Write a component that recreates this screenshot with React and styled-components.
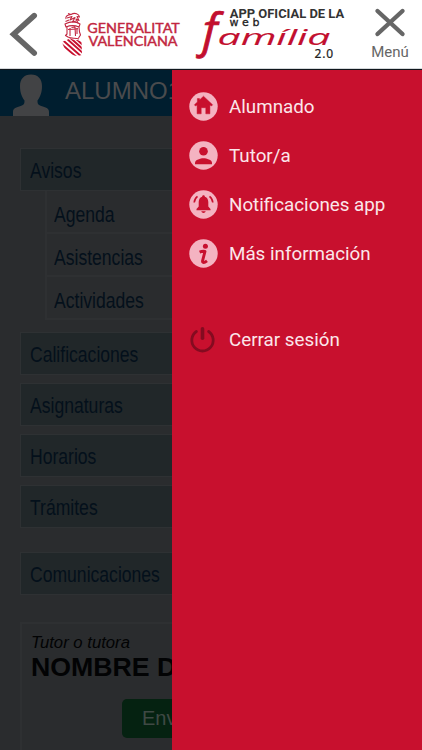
import React from "react"
import styled, { createGlobalStyle } from "styled-components"

const GlobalStyle = createGlobalStyle`
  * {
    box-sizing: border-box;
  }

  body {
    margin: 0;
    background: #2a2c2e;
    overflow: hidden;
  }
`

const Screen = styled.div`
  height: 750px;
  display: flex;
  flex-direction: column;
  overflow: hidden;
  font-family: Roboto, "Liberation Sans", sans-serif;
`

const Header = styled.header`
  flex: none;
  height: 69px;
  background: #fff;
  border-bottom: 1px solid #d5d8db;
  display: flex;
  align-items: flex-start;
`

const BackButton = styled.button`
  width: 60px;
  height: 68px;
  padding: 0;
  border: 0;
  background: none;
`

const Brand = styled.div`
  width: 130px;
  height: 68px;
`

const AppLogo = styled.div`
  width: 171px;
  height: 68px;
`

const MenuButton = styled.button`
  width: 58px;
  height: 68px;
  padding: 7px 0 0;
  border: 0;
  background: none;
  color: #666;
  font: 15px/18px Roboto, sans-serif;
  display: flex;
  flex-direction: column;
  align-items: center;
  gap: 4px;
`

const Body = styled.main`
  flex: 1;
  position: relative;
  overflow: hidden;
  border-top: 1px solid #10161c;
`

const StudentBar = styled.div`
  height: 46px;
  background: #001e2f;
  color: #4a4b4d;
  display: flex;
  align-items: flex-end;
  gap: 15px;
  padding-left: 12px;
  font: 24px/50px "Liberation Sans", sans-serif;
  white-space: nowrap;

  svg {
    flex: none;
  }
`

const Content = styled.div`
  padding: 32px 0 0 20px;
  font-family: "Liberation Sans", sans-serif;
  color: #04101b;
`

const Item = styled.div`
  height: 43px;
  margin-top: ${p => p.$gap || 0}px;
  padding: 2px 0 0 9px;
  border: 1px solid #2e3133;
  border-right: 0;
  background: #212729;
  display: flex;
  align-items: center;
`

const SubItem = styled.div`
  height: 43px;
  margin-left: 25px;
  padding: 6px 0 0 7px;
  border-left: 2px solid #2e3032;
  border-bottom: 2px solid #2e3032;
  display: flex;
  align-items: center;
`

const Label = styled.span`
  font-size: 21.3px;
  line-height: 24px;
  display: inline-block;
  transform: scaleX(0.825);
  transform-origin: left;
`

const Card = styled.div`
  height: 160px;
  margin-top: 27px;
  padding: 9px 0 0 9px;
  border: 2px solid #2e3032;
  color: #020304;
  white-space: nowrap;
`

const Role = styled.div`
  font-size: 16.7px;
  line-height: 19px;
  font-style: italic;
`

const Name = styled.div`
  font-size: 26.7px;
  line-height: 30px;
  font-weight: bold;
`

const SendButton = styled.button`
  display: block;
  width: 120px;
  height: 39px;
  margin: 17px 0 0 91px;
  padding: 0 0 0 20px;
  border: 0;
  border-radius: 5px;
  background: #052211;
  color: #3f4944;
  font: 20px "Liberation Sans", sans-serif;
  text-align: left;
`

const Drawer = styled.nav`
  position: absolute;
  top: 0;
  right: 0;
  bottom: 0;
  width: 250.5px;
  padding: 12px 0 0 17.5px;
  background: #c8102e;
  color: #fbe6ea;
`

const DrawerLink = styled.a`
  height: 49px;
  margin-top: ${p => p.$gap || 0}px;
  display: flex;
  align-items: center;
  gap: 11px;
  font-size: 18.8px;
  white-space: nowrap;
`

const PINK = "#f4b3c1"
const RED = "#c8102e"

const HomeIcon = () => (
  <svg width="29" height="29" viewBox="0 0 29 29">
    <circle cx="14.5" cy="14.5" r="14.2" fill={PINK} />
    <path d="M14.5 4.2 23.6 12.8 22.5 14 20.9 13V21.8H16.8V15.7H12.2V21.8H8.1V13L6.5 14 5.4 12.8 8.4 10V6.6H10.5V8Z" fill={RED} stroke={RED} strokeWidth=".5" />
  </svg>
)

const PersonIcon = () => (
  <svg width="29" height="29" viewBox="0 0 29 29">
    <circle cx="14.5" cy="14.5" r="14.2" fill={PINK} />
    <circle cx="14.5" cy="10.3" r="4.3" fill={RED} />
    <path d="M6 23.2V21.7C6 18.7 11.5 17.2 14.5 17.2S23 18.7 23 21.7V23.2Z" fill={RED} />
  </svg>
)

const BellIcon = () => (
  <svg width="29" height="29" viewBox="0 0 29 29">
    <circle cx="14.5" cy="14.5" r="14.2" fill={PINK} />
    <path d="M14.5 5.2C15.4 5.2 15.9 5.8 15.9 6.7 18.3 7.5 19.3 9.8 19.3 12V16.5L21.5 19V20.2H7.5V19L9.7 16.5V12C9.7 9.8 10.7 7.5 13.1 6.7 13.1 5.8 13.6 5.2 14.5 5.2ZM12.3 21.3H16.7C16.4 22.5 15.5 23 14.5 23S12.6 22.5 12.3 21.3Z" fill={RED} />
    <path d="M5.2 12.5C5.4 9.7 6.5 7.8 8.5 6.3M23.8 12.5C23.6 9.7 22.5 7.8 20.5 6.3" fill="none" stroke={RED} strokeWidth="1.6" />
  </svg>
)

const InfoIcon = () => (
  <svg width="29" height="29" viewBox="0 0 29 29">
    <circle cx="14.5" cy="14.5" r="14.2" fill={PINK} />
    <circle cx="16.4" cy="7.2" r="2.5" fill={RED} />
    <path d="M10.6 13.1C12.2 12.4 13.8 12.1 16 12.4L13.6 21.6C13.1 24.3 15.3 23.9 18 21.8" fill="none" stroke={RED} strokeWidth="2.9" strokeLinejoin="round" />
  </svg>
)

const PowerIcon = () => (
  <svg width="29" height="29" viewBox="0 0 29 29" fill="none" stroke="#840b20" strokeLinecap="round">
    <path d="M7.4 6.5A10.7 10.7 0 1 0 19.6 6.5" strokeWidth="2.8" />
    <path d="M13.5 3.7V13.3" strokeWidth="3.6" />
  </svg>
)

const links = [
  { text: "Alumnado", Icon: HomeIcon },
  { text: "Tutor/a", Icon: PersonIcon },
  { text: "Notificaciones app", Icon: BellIcon },
  { text: "Más información", Icon: InfoIcon },
  { text: "Cerrar sesión", Icon: PowerIcon, gap: 37 },
]

const items = [
  { text: "Calificaciones", gap: 12 },
  { text: "Asignaturas", gap: 8 },
  { text: "Horarios", gap: 8 },
  { text: "Trámites", gap: 8 },
  { text: "Comunicaciones", gap: 24 },
]

const GeneralitatLogo = () => (
  <svg width="130" height="68" viewBox="60 0 130 68">
    <g fill="none" stroke="#c22640" strokeWidth="1.1" strokeLinejoin="round">
      <path d="M66 19C65 16 68 15 71 14.5L68 13.5M71 14.5C75 12 79 14 79.5 17L77 16.5 79 20.5 76 19 78 23M67 18 72 16.5 70 20 75 17.5 72.5 22 76 21M65.5 21.5 69 20" />
      <path d="M65 24C70 21.5 76 21.5 80 24L79 27C75 25.3 70 25.3 66 27ZM67 27V34L65.5 35.5 68 37C72 39 75 37.5 79 39M79 27 79.5 32 80.5 35 78.5 38M70 28V36M71.5 27.5 75 27 75.5 36M77 28V34M68 29.5 78 29" />
    </g>
    <clipPath id="shield">
      <path d="M62 42 70 38.5C74 40.5 78 39 81.5 42L82 55 77 56C70 55 64 50 62 42Z" />
    </clipPath>
    <g clipPath="url(#shield)" stroke="#c8102e" strokeWidth="1.9">
      <path d="M58 41 80 60M62 39.5 83 58M66 38 85 55M70 37.5 86 52M74 37 88 49.5" />
    </g>
    <g fill="#c22640" stroke="#c22640" strokeWidth=".4" fontFamily="Lato, sans-serif" fontSize="13">
      <text x="87.3" y="32.8" textLength="92.5" lengthAdjust="spacingAndGlyphs">GENERALITAT</text>
      <text x="88.5" y="45.6" textLength="89" lengthAdjust="spacingAndGlyphs">VALENCIANA</text>
    </g>
  </svg>
)

const FamiliaLogo = () => (
  <svg width="171" height="68" viewBox="190 0 171 68" overflow="visible">
    <g fill="#c20f2f" stroke="#c20f2f" fontFamily="Open Sans, sans-serif" fontStyle="italic">
      <text transform="translate(202 47) skewX(-2)" fontSize="47" strokeWidth=".8">f</text>
      <text transform="translate(217.5 45)" fontSize="22.5" strokeWidth=".1" textLength="113" lengthAdjust="spacingAndGlyphs">amília</text>
    </g>
    <text x="229.7" y="18.3" fill="#333" fontFamily="Roboto, sans-serif" fontWeight="700" fontSize="12.2" textLength="114.5" lengthAdjust="spacingAndGlyphs">APP OFICIAL DE LA</text>
    <text x="229.5" y="26.3" fill="#222" stroke="#222" strokeWidth=".3" fontFamily="DejaVu Sans, sans-serif" fontSize="11" textLength="30" lengthAdjust="spacing">web</text>
    <text x="314.5" y="58" fill="#222" stroke="#222" strokeWidth=".2" fontFamily="Noto Sans, sans-serif" fontSize="12" textLength="18.5">2.0</text>
  </svg>
)

export default function App() {
  return (
    <>
      <GlobalStyle />
      <Screen>
        <Header>
          <BackButton aria-label="Volver">
            <svg width="60" height="68" fill="none" stroke="#666" strokeWidth="5.6" strokeLinecap="round">
              <path d="M34.2 15.6 13.6 34.2 34.2 53" />
            </svg>
          </BackButton>
          <Brand><GeneralitatLogo /></Brand>
          <AppLogo><FamiliaLogo /></AppLogo>
          <MenuButton>
            <svg width="32" height="32" fill="none" stroke="#666" strokeWidth="4.4" strokeLinecap="round">
              <path d="M3.5 4 28.5 27M28.5 4 3.5 27" />
            </svg>
            <span>Menú</span>
          </MenuButton>
        </Header>
        <Body>
          <StudentBar>
            <svg width="38" height="42" viewBox="0 0 38 42" fill="#424345">
              <path d="M19 .5C26 .5 30 5 30 12 30 19 28 23 25.5 26.5 25.5 30 26 31 30 32.3 34.5 33.8 37 34.3 37 38V42H1V38C1 34.3 3.5 33.8 8 32.3 12 31 12.5 30 12.5 26.5 10 23 8 19 8 12 8 5 12 .5 19 .5Z" />
            </svg>
            <span>ALUMNO1</span>
          </StudentBar>
          <Content>
            <Item><Label>Avisos</Label></Item>
            <SubItem><Label>Agenda</Label></SubItem>
            <SubItem><Label>Asistencias</Label></SubItem>
            <SubItem><Label>Actividades</Label></SubItem>
            {items.map(item => (
              <Item key={item.text} $gap={item.gap}>
                <Label>{item.text}</Label>
              </Item>
            ))}
            <Card>
              <Role>Tutor o tutora</Role>
              <Name>NOMBRE DEL TUTOR</Name>
              <SendButton>Enviar</SendButton>
            </Card>
          </Content>
          <Drawer>
            {links.map(({ text, Icon, gap }) => (
              <DrawerLink key={text} $gap={gap}>
                <Icon />
                <span>{text}</span>
              </DrawerLink>
            ))}
          </Drawer>
        </Body>
      </Screen>
    </>
  )
}
